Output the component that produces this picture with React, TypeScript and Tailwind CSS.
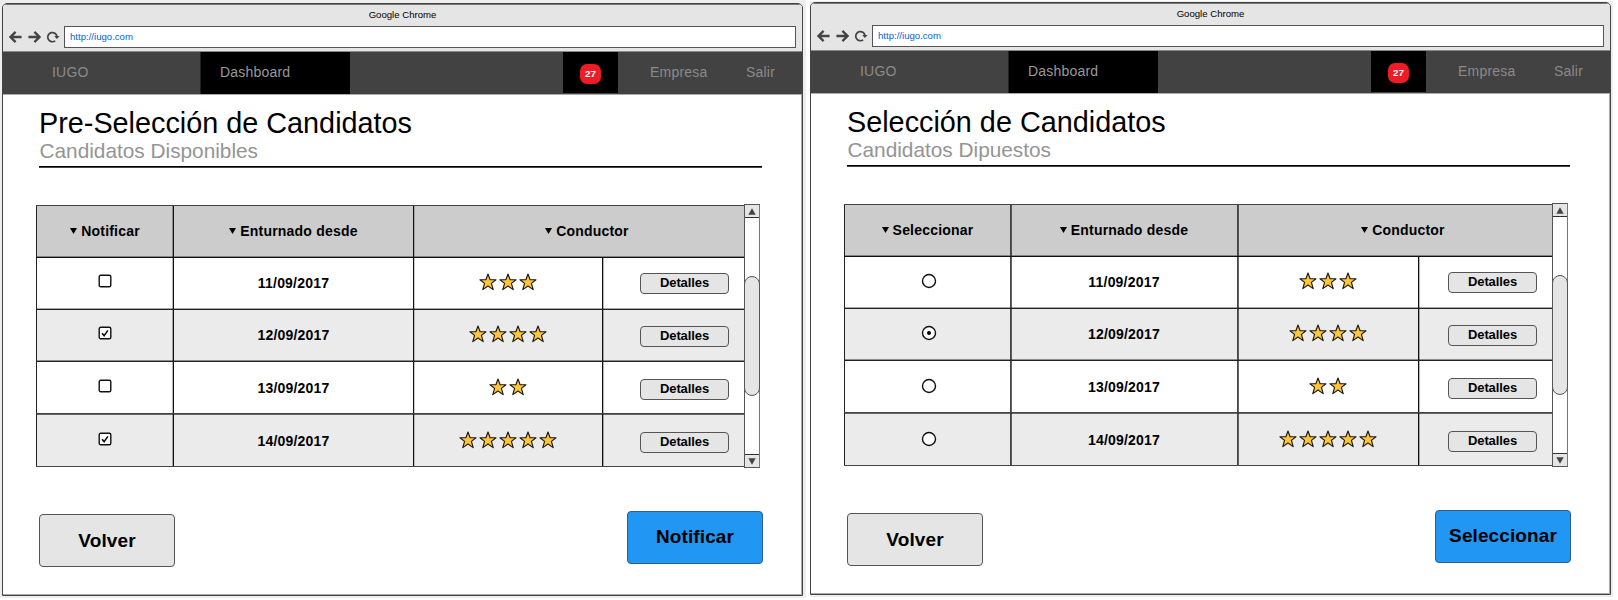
import React from "react";

type Row = { date: string; stars: number; checked: boolean };

type Screen = {
  kind: "checkbox" | "radio";
  title: string;
  subtitle: string;
  selectLabel: string;
  action: string;
  rows: Row[];
  columns: string[];
  columnLines: string[];
};

const rowStyles = [
  { row: "h-[52px] bg-white border-[#111] shadow-[0_-1px_0_rgba(0,0,0,0.35)]", strip: "h-[48px]", button: "mt-[3px]" },
  { row: "h-[52px] bg-[#ebebeb] border-[#222] shadow-[0_-1px_0_rgba(0,0,0,0.35)]", strip: "h-[48px]", button: "mt-[5px]" },
  { row: "h-[52px] bg-white border-[#222] shadow-[0_-1px_0_rgba(0,0,0,0.4)]", strip: "h-[50px]", button: "mt-[5px]" },
  { row: "h-[53px] bg-[#ebebeb] border-[#444] shadow-[inset_0_1px_0_#666]", strip: "h-[52px]", button: "mt-[5px]" },
];

const screens: Screen[] = [
  {
    kind: "checkbox",
    title: "Pre-Selección de Candidatos",
    subtitle: "Candidatos Disponibles",
    selectLabel: "Notificar",
    action: "Notificar",
    rows: [
      { date: "11/09/2017", stars: 3, checked: false },
      { date: "12/09/2017", stars: 4, checked: true },
      { date: "13/09/2017", stars: 2, checked: false },
      { date: "14/09/2017", stars: 5, checked: true },
    ],
    columns: ["w-[137px]", "w-[240px]", "w-[189px]", "w-[158px]"],
    columnLines: [
      "border-[#222]",
      "border-[#111] shadow-[-1px_0_0_rgba(0,0,0,0.3)]",
      "border-[#111] shadow-[inset_1px_0_0_rgba(0,0,0,0.2)]",
      "border-[#111] shadow-[inset_1px_0_0_rgba(0,0,0,0.3)]",
    ],
  },
  {
    kind: "radio",
    title: "Selección de Candidatos",
    subtitle: "Candidatos Dipuestos",
    selectLabel: "Seleccionar",
    action: "Seleccionar",
    rows: [
      { date: "11/09/2017", stars: 3, checked: false },
      { date: "12/09/2017", stars: 4, checked: true },
      { date: "13/09/2017", stars: 2, checked: false },
      { date: "14/09/2017", stars: 5, checked: false },
    ],
    columns: ["w-[166px]", "w-[227px]", "w-[181px]", "w-[150px]"],
    columnLines: [
      "border-[#222]",
      "border-[#444] shadow-[inset_1px_0_0_rgba(0,0,0,0.6)]",
      "border-[#444] shadow-[inset_1px_0_0_rgba(0,0,0,0.6)]",
      "border-[#111] shadow-[inset_1px_0_0_rgba(0,0,0,0.3)]",
    ],
  },
];

function Arrow({ flip = false }: { flip?: boolean }) {
  return (
    <svg width="13" height="12" viewBox="0 0 13 12" className={flip ? "-scale-x-100" : ""}>
      <path d="M12.6 6H1.8M6.6 0.9L1.5 6l5.1 5.1" fill="none" stroke="#444" strokeWidth="2.3" />
    </svg>
  );
}

function Reload() {
  return (
    <svg width="13" height="12" viewBox="0 0 13 12">
      <path d="M8.2 9.8A4.6 4.6 0 1 1 10 6" fill="none" stroke="#444" strokeWidth="1.7" />
      <path d="M7.2 4.9h5.4L9.9 8.1z" fill="#444" />
    </svg>
  );
}

function Star() {
  return (
    <svg width="18" height="18" viewBox="0 0 18 18">
      <path
        d="M9 1l2.1 5.7h5.9l-4.6 3.7 1.8 6.2L9 13l-5.2 3.6 1.8-6.2L1 6.7h5.9z"
        fill="#ffc636"
        stroke="#1c1a14"
        strokeWidth="1.15"
        strokeLinejoin="round"
      />
    </svg>
  );
}

function Selector({ kind, checked }: { kind: Screen["kind"]; checked: boolean }) {
  if (kind === "radio") {
    return (
      <svg width="16" height="16" viewBox="0 0 16 16" className="ml-[2px] -mt-px">
        <circle cx="8" cy="8" r="6.5" fill="#fff" stroke="#111" strokeWidth="1.4" />
        {checked && <circle cx="8" cy="8" r="2" fill="#000" />}
      </svg>
    );
  }
  return (
    <svg width="14" height="14" viewBox="0 0 14 14" className="-mt-0.5">
      <rect x="1.2" y="1.2" width="11.6" height="11.6" rx="1.6" fill="#fff" stroke="#111" strokeWidth="1.4" />
      {checked && <path d="M4 7.2l2.1 2.4L9.9 4.4" fill="none" stroke="#111" strokeWidth="1.6" />}
    </svg>
  );
}

function HeaderLabel({ children }: { children: React.ReactNode }) {
  return (
    <div className="flex h-[50px] items-center justify-center gap-1">
      <svg width="7" height="6" viewBox="0 0 7 6">
        <path d="M0 0h7L3.5 6z" fill="#000" />
      </svg>
      <span>{children}</span>
    </div>
  );
}

function Scrollbar() {
  return (
    <div className="absolute -top-px right-0 flex h-[264px] w-4 flex-col items-center border border-[#555] border-r-[#777] bg-white">
      <div className="flex h-[12px] w-full shrink-0 items-center justify-center bg-[#e5e5e5]">
        <svg width="8" height="7" viewBox="0 0 8 7">
          <path d="M4 0.3L7.7 6.7H0.3z" fill="#444" />
        </svg>
      </div>
      <div className="h-px w-full bg-[#333]" />
      <div className="mt-[58px] h-[120px] w-4 shrink-0 rounded-full border border-[#555] bg-[#e5e5e5]" />
      <div className="mt-auto h-px w-full bg-[#333]" />
      <div className="flex h-[12px] w-full shrink-0 items-center justify-center bg-[#e5e5e5]">
        <svg width="8" height="7" viewBox="0 0 8 7">
          <path d="M4 6.7L7.7 0.3H0.3z" fill="#444" />
        </svg>
      </div>
    </div>
  );
}

function CandidateTable({ screen }: { screen: Screen }) {
  const { columns: w, columnLines: l } = screen;
  return (
    <div className="relative ml-[33px] mt-[37px] w-[724px] text-[14px] leading-4 font-bold tracking-[0.2px]">
      <div className="flex h-[52px] border-t border-[#444] bg-[#ccc]">
        <div className={`shrink-0 border-l ${w[0]} ${l[0]}`}>
          <HeaderLabel>{screen.selectLabel}</HeaderLabel>
        </div>
        <div className={`shrink-0 border-l ${w[1]} ${l[1]}`}>
          <HeaderLabel>Enturnado desde</HeaderLabel>
        </div>
        <div className={`flex-1 border-l ${l[2]}`}>
          <HeaderLabel>Conductor</HeaderLabel>
        </div>
      </div>
      {screen.rows.map((row, i) => (
        <div key={row.date} className={`flex border-t ${rowStyles[i].row}`}>
          <div className={`shrink-0 border-l ${w[0]} ${l[0]}`}>
            <div className={`flex items-center justify-center ${rowStyles[i].strip}`}>
              <Selector kind={screen.kind} checked={row.checked} />
            </div>
          </div>
          <div className={`shrink-0 border-l ${w[1]} ${l[1]}`}>
            <div className={`flex items-center justify-center pt-[2px] ${rowStyles[i].strip}`}>{row.date}</div>
          </div>
          <div className={`shrink-0 border-l ${w[2]} ${l[2]}`}>
            <div className={`flex items-center justify-center gap-0.5 ${rowStyles[i].strip}`}>
              {Array.from({ length: row.stars }, (_, n) => (
                <Star key={n} />
              ))}
            </div>
          </div>
          <div className={`shrink-0 border-l ${w[3]} ${l[3]}`}>
            <div className={`flex items-center justify-end pr-[31px] ${rowStyles[i].strip}`}>
              <button
                className={`flex h-[21px] w-[89px] items-center justify-center rounded-[4px] border border-[#555] bg-[#e5e5e5] pb-[2px] text-[13px] leading-4 tracking-[-0.1px] ${rowStyles[i].button}`}
              >
                Detalles
              </button>
            </div>
          </div>
        </div>
      ))}
      <div className="h-px bg-[#444]" />
      <Scrollbar />
    </div>
  );
}

function BrowserWindow({ screen }: { screen: Screen }) {
  return (
    <div className="flex h-[593px] w-[801px] flex-col overflow-hidden rounded-t-[5px] border border-[#444] bg-white shadow-[inset_0_1px_0_#999,inset_-1px_-1px_0_#aaa]">
      <div className="flex h-[48px] shrink-0 flex-col border-b border-[#888] bg-[#e5e5e5] shadow-[inset_0_1px_0_#777]">
        <div className="mb-px h-[21px] text-center text-[9.6px] leading-[21px]">Google Chrome</div>
        <div className="flex h-[22px] items-center pl-[6px]">
          <div className="flex w-[55px] items-center gap-[6px] pb-px">
            <Arrow />
            <Arrow flip />
            <Reload />
          </div>
          <div className="flex h-[22px] w-[732px] items-center border border-[#555] bg-white pb-px pl-[5px] text-[9.6px] leading-3 text-[#0066dd]">
            http://iugo.com
          </div>
        </div>
      </div>
      <nav className="flex h-[43px] shrink-0 border-b border-[#aaa] bg-[#424242] text-[14px] leading-[40px] tracking-[0.2px] text-[#8a8a8a]">
        <div className="w-[197px] pl-[49px]">IUGO</div>
        <div className="w-[150px] border-l border-[#222] bg-black pl-[19px] text-[#999]">Dashboard</div>
        <div className="ml-[213px] flex h-[41px] w-[55px] items-center justify-center bg-black pt-[2px]">
          <span className="flex h-[20px] w-[21px] items-center justify-center rounded-[7px] bg-[#ee1c24] text-[9.8px] leading-none font-bold tracking-normal text-white">
            27
          </span>
        </div>
        <div className="w-[128px] pl-[32px]">Empresa</div>
        <div>Salir</div>
      </nav>
      <h1 className="mt-[11px] pl-[36px] text-[28.8px] leading-[34px]">{screen.title}</h1>
      <h2 className="pl-[36.5px] text-[20.8px] leading-[22px] text-[#949494]">{screen.subtitle}</h2>
      <div className="ml-[36px] mt-[4px] h-[2px] w-[723px] shrink-0 border-b border-[#444] bg-black" />
      <CandidateTable screen={screen} />
      <div className="flex items-start justify-between pt-[44px] pr-[39px] pl-[36px] text-[19px] leading-6 font-bold tracking-[0.1px]">
        <button className="mt-[3px] h-[53px] w-[136px] rounded-[4px] border border-[#555] bg-[#e5e5e5]">Volver</button>
        <button className="h-[53px] w-[136px] rounded-[4px] border border-[#2c5f8c] bg-[#2196f3] pb-px">{screen.action}</button>
      </div>
    </div>
  );
}

export default function App() {
  return (
    <div className="flex h-[600px] w-[1618px] items-start gap-1 overflow-hidden bg-white font-['Liberation_Sans',Arial,sans-serif] text-black">
      <div className="h-[598px] w-[806px] shrink-0 bg-[#eee] pt-[3px] pl-[2px]">
        <BrowserWindow screen={screens[0]} />
      </div>
      <div className="mt-px h-[596px] w-[803px] shrink-0 bg-[#eee] pt-px">
        <BrowserWindow screen={screens[1]} />
      </div>
    </div>
  );
}
